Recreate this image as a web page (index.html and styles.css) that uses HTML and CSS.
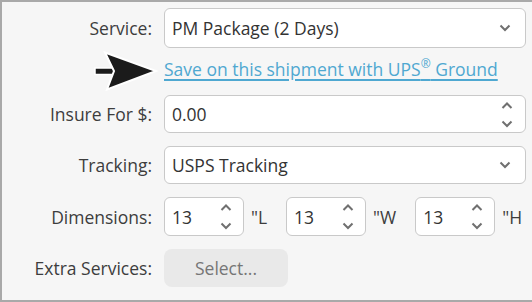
FILE: index.html
```html
<!DOCTYPE html>
<html>
<head>
<meta charset="utf-8">
<link rel="stylesheet" href="styles.css">
</head>
<body>
<div class="panel">
  <div class="label">Service:</div>
  <div class="field select tall">
    <span class="val">PM Package (2 Days)</span>
    <svg class="chev" width="12" height="8" viewBox="0 0 12 8"><path d="M1.5 1.5 L6 6 L10.5 1.5" fill="none" stroke="#707070" stroke-width="2"/></svg>
  </div>

  <div class="label arrow-cell">
    <svg class="arrow" width="66" height="42" viewBox="0 0 66 42">
      <path d="M2 17 H22 V23.5 H2 Z" fill="#1b1b1b" stroke="#fff" stroke-width="1.5"/>
      <path d="M12 1.5 L63 20 L14 38.5 L21 20 Z" fill="#1b1b1b" stroke="#fff" stroke-width="2" stroke-linejoin="miter"/>
    </svg>
  </div>
  <div class="linkrow"><a class="link" href="#">Save on this shipment with UPS<sup>®</sup> Ground</a></div>

  <div class="label">Insure For $:</div>
  <div class="field">
    <span class="val">0.00</span>
    <span class="spin">
      <svg width="12" height="8" viewBox="0 0 12 8"><path d="M1.5 6 L6 1.5 L10.5 6" fill="none" stroke="#707070" stroke-width="2"/></svg>
      <svg width="12" height="8" viewBox="0 0 12 8"><path d="M1.5 1.5 L6 6 L10.5 1.5" fill="none" stroke="#707070" stroke-width="2"/></svg>
    </span>
  </div>

  <div class="label">Tracking:</div>
  <div class="field select">
    <span class="val">USPS Tracking</span>
    <svg class="chev" width="12" height="8" viewBox="0 0 12 8"><path d="M1.5 1.5 L6 6 L10.5 1.5" fill="none" stroke="#707070" stroke-width="2"/></svg>
  </div>

  <div class="label dimlabel">Dimensions:</div>
  <div class="dims">
    <div class="dim">
      <div class="field small">
        <span class="val">13</span>
        <span class="spin">
          <svg width="12" height="8" viewBox="0 0 12 8"><path d="M1.5 6 L6 1.5 L10.5 6" fill="none" stroke="#707070" stroke-width="2"/></svg>
          <svg width="12" height="8" viewBox="0 0 12 8"><path d="M1.5 1.5 L6 6 L10.5 1.5" fill="none" stroke="#707070" stroke-width="2"/></svg>
        </span>
      </div>
      <span class="unit">"L</span>
    </div>
    <div class="dim">
      <div class="field small">
        <span class="val">13</span>
        <span class="spin">
          <svg width="12" height="8" viewBox="0 0 12 8"><path d="M1.5 6 L6 1.5 L10.5 6" fill="none" stroke="#707070" stroke-width="2"/></svg>
          <svg width="12" height="8" viewBox="0 0 12 8"><path d="M1.5 1.5 L6 6 L10.5 1.5" fill="none" stroke="#707070" stroke-width="2"/></svg>
        </span>
      </div>
      <span class="unit">"W</span>
    </div>
    <div class="dim">
      <div class="field small">
        <span class="val">13</span>
        <span class="spin">
          <svg width="12" height="8" viewBox="0 0 12 8"><path d="M1.5 6 L6 1.5 L10.5 6" fill="none" stroke="#707070" stroke-width="2"/></svg>
          <svg width="12" height="8" viewBox="0 0 12 8"><path d="M1.5 1.5 L6 6 L10.5 1.5" fill="none" stroke="#707070" stroke-width="2"/></svg>
        </span>
      </div>
      <span class="unit">"H</span>
    </div>
  </div>

  <div class="label">Extra Services:</div>
  <div class="btnrow"><button class="selbtn">Select...</button></div>
</div>
</body>
</html>
```

FILE: styles.css
```css
html, body {
  margin: 0;
  padding: 0;
}
body {
  width: 532px;
  height: 302px;
  overflow: hidden;
  font-family: "Open Sans", "Liberation Sans", sans-serif;
  font-size: 17.5px;
  color: #333;
}
.panel {
  box-sizing: border-box;
  height: 302px;
  background: #f6f6f6;
  border-top: 2px solid #a9a9a9;
  border-left: 2px solid #a9a9a9;
  border-bottom: 2px solid #a9a9a9;
  padding: 6px 6px 0 0;
  display: grid;
  grid-template-columns: 150px 1fr;
  grid-template-rows: 40px 21px 38px 38px 39px 38px;
  column-gap: 12px;
  row-gap: 13px;
}
.label {
  display: flex;
  align-items: center;
  justify-content: flex-end;
  color: #3d3d3d;
  white-space: nowrap;
}
.arrow-cell {
  position: relative;
}
.arrow {
  position: absolute;
  left: 91px;
  top: -10px;
}
.field {
  box-sizing: border-box;
  display: flex;
  align-items: center;
  background: #fff;
  border: 1px solid #c9c9c9;
  border-radius: 6px;
  padding: 0 12px 0 7px;
  color: #333;
}
.field .val {
  flex: 1;
}
.chev {
  margin-right: 2px;
}
.spin {
  display: flex;
  flex-direction: column;
  justify-content: space-between;
  height: 26px;
  margin-top: 1px;
}
.spin svg {
  display: block;
}
.linkrow {
  display: flex;
  align-items: center;
  margin-top: -5px;
}
.link {
  color: #4fa8d1;
  text-decoration: underline;
  text-decoration-thickness: 1.5px;
  text-underline-offset: 3px;
  white-space: nowrap;
}
.link sup {
  font-size: 12px;
  vertical-align: 8px;
  line-height: 0;
}
.dims {
  display: flex;
  gap: 19px;
}
.dim {
  display: flex;
  align-items: center;
}
.field.small {
  width: 80px;
  height: 39px;
  padding-right: 11px;
}
.unit {
  margin-left: 7px;
  color: #3d3d3d;
}
.btnrow {
  display: flex;
}
.selbtn {
  width: 124px;
  height: 38px;
  border: none;
  border-radius: 8px;
  background: #e9e9e9;
  color: #767676;
  font-family: "Open Sans", "Liberation Sans", sans-serif;
  font-size: 17.5px;
  padding: 0;
}
```
